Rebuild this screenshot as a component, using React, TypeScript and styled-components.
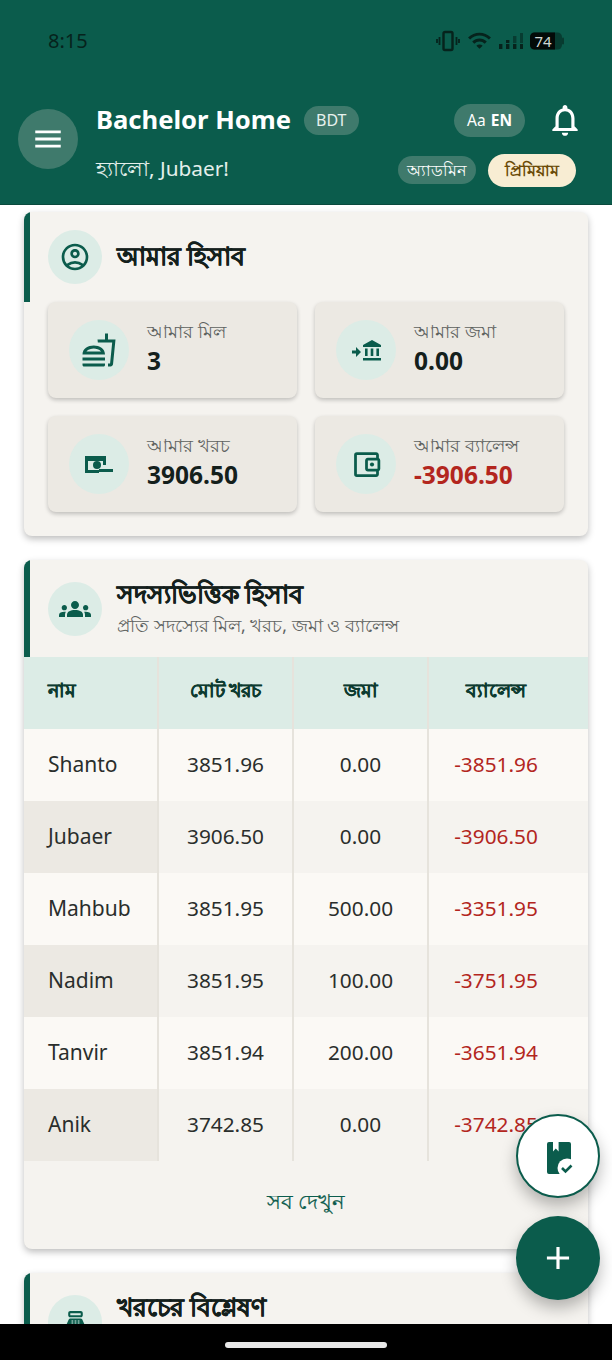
import React from 'react'
import styled, { createGlobalStyle } from 'styled-components'
import {
  MdAdd,
  MdGroups,
  MdMenu,
  MdOutlineAccountBalanceWallet,
  MdOutlineAccountCircle,
  MdOutlineFastfood,
  MdOutlineNotifications,
  MdPointOfSale,
  MdWifi,
} from 'react-icons/md'

const green = '#0b5c4c'
const mint = '#dcece6'
const font = '"Noto Sans", "Open Sans", sans-serif'

const GlobalStyle = createGlobalStyle`
  html, body { margin: 0; padding: 0; background: #fff; }
  * { box-sizing: border-box; }
  body { font-family: ${font}; }
`

const Screen = styled.div`
  position: relative;
  width: 612px;
  height: 1360px;
  overflow: hidden;
  display: flex;
  flex-direction: column;
  background: #fff;
`
const Header = styled.header`
  flex: none;
  height: 205px;
  background: ${green};
  border-bottom: 1px solid #0a4a3d;
  padding: 0 18px;
`
const StatusBar = styled.div`
  height: 81px;
  display: flex;
  align-items: center;
  justify-content: space-between;
  padding: 0 30px 0 30px;
  color: #06231c;
  font-size: 20px;
`
const StatusIcons = styled.div`
  display: flex;
  align-items: center;
  gap: 7px;
`
const AppBar = styled.div`
  display: flex;
  align-items: flex-start;
  gap: 18px;
  padding-top: 22px;
`
const MenuButton = styled.div`
  flex: none;
  width: 60px;
  height: 60px;
  margin-top: 6px;
  border-radius: 50%;
  background: #3f7a6c;
  color: #fff;
  display: flex;
  align-items: center;
  justify-content: center;
`
const AppBarBody = styled.div`
  flex: 1;
  display: flex;
  flex-direction: column;
  gap: 16px;
`
const BarRow = styled.div`
  height: 34px;
  display: flex;
  align-items: center;
  justify-content: space-between;
`
const TitleGroup = styled.div`
  display: flex;
  align-items: center;
  gap: 13px;
`
const HomeName = styled.div`
  color: #fff;
  font-size: 25.600px;
  font-weight: 700;
  line-height: 34px;
`
const CurrencyPill = styled.div`
  background: #3f7a6c;
  color: #e8f1ee;
  font-size: 16px;
  height: 29px;
  line-height: 29px;
  padding: 0 12px;
  border-radius: 15px;
`
const Actions = styled.div`
  display: flex;
  align-items: center;
  gap: 21px;
  color: #fff;
  padding-right: 10px;
`
const LangPill = styled.div`
  background: #3f7a6c;
  color: #fff;
  height: 33px;
  padding: 0 13px;
  border-radius: 17px;
  display: flex;
  align-items: center;
  gap: 5px;
  font-size: 15.500px;
`
const LangStrong = styled.b`
  font-weight: 700;
`
const Greeting = styled.div`
  color: #e4efeb;
  font-size: 20.800px;
  line-height: 30px;
  padding-bottom: 5px;
`
const Badges = styled.div`
  display: flex;
  align-items: center;
  gap: 12px;
  padding-right: 18px;
`
const RoleBadge = styled.div<{ $premium?: boolean }>`
  height: ${p => (p.$premium ? 33 : 28)}px;
  line-height: ${p => (p.$premium ? 33 : 28)}px;
  padding: 0 ${p => (p.$premium ? 17 : 9)}px;
  border-radius: 17px;
  font-size: 16px;
  font-weight: ${p => (p.$premium ? 700 : 400)};
  background: ${p => (p.$premium ? '#f8edd3' : '#3f7a6c')};
  color: ${p => (p.$premium ? '#6b4a07' : '#fff')};
`
const Main = styled.main`
  flex: 1;
  min-height: 0;
  overflow: hidden;
  padding: 7px 24px 0;
  display: flex;
  flex-direction: column;
  gap: 24px;
`
const Card = styled.section`
  flex: none;
  background: #f5f3ef;
  border-radius: 8px;
  box-shadow: 0 3px 7px rgba(0, 0, 0, 0.26);
  overflow: hidden;
`
const SectionHead = styled.div<{ $height: number }>`
  height: ${p => p.$height}px;
  border-left: 6px solid ${green};
  padding: 0 18px;
  display: flex;
  align-items: center;
  gap: 15px;
`
const IconCircle = styled.div<{ $size: number }>`
  flex: none;
  width: ${p => p.$size}px;
  height: ${p => p.$size}px;
  border-radius: 50%;
  background: ${mint};
  color: ${green};
  display: flex;
  align-items: center;
  justify-content: center;
`
const SectionTitle = styled.h2`
  margin: 0;
  padding-bottom: 4px;
  color: #14201c;
  font-size: 24.800px;
  font-weight: 700;
  line-height: 32px;
  -webkit-text-stroke: 0.4px currentColor;
`
const SectionSub = styled.div`
  color: #5e625f;
  font-size: 17.500px;
  line-height: 24px;
  padding-bottom: 3px;
`
const StatGrid = styled.div`
  display: grid;
  grid-template-columns: 1fr 1fr;
  gap: 18px;
  padding: 0 24px 24px;
`
const StatCard = styled.div`
  height: 96px;
  background: #ece9e3;
  border-radius: 8px;
  box-shadow: 0 2px 4px rgba(0, 0, 0, 0.22);
  padding: 0 21px;
  display: flex;
  align-items: center;
  gap: 18px;
`
const StatText = styled.div`
  padding-bottom: 2px;
`
const StatLabel = styled.div`
  color: #5e625f;
  font-size: 18px;
  line-height: 24px;
`
const StatValue = styled.div<{ $negative?: boolean }>`
  color: ${p => (p.$negative ? '#b3261e' : '#14201c')};
  font-size: 24.500px;
  font-weight: 700;
  line-height: 36px;
`
const Table = styled.div`
  display: grid;
  grid-template-columns: 135px 135px 135px 159px;
  grid-auto-rows: 72px;
`
const HeadCell = styled.div<{ $first?: boolean; $last?: boolean }>`
  background: ${mint};
  color: #0d3b30;
  font-size: 18.500px;
  font-weight: 700;
  -webkit-text-stroke: 0.3px currentColor;
  display: flex;
  align-items: center;
  justify-content: ${p => (p.$first ? 'flex-start' : 'center')};
  padding: 0 ${p => (p.$last ? 25 : 0)}px 2px ${p => (p.$first ? 24 : 0)}px;
  border-right: ${p => (p.$last ? 0 : 2)}px solid #e6e3dc;
`
const NameCell = styled.div<{ $even: boolean }>`
  background: ${p => (p.$even ? '#ece9e3' : '#fbf9f5')};
  color: #2a2e2c;
  font-size: 21px;
  display: flex;
  align-items: center;
  padding: 0 0 2px 24px;
  border-right: 2px solid #e6e3dc;
`
const DataCell = styled.div<{ $even: boolean; $negative?: boolean }>`
  background: ${p => (p.$even ? '#f5f3ef' : '#fbf9f5')};
  color: ${p => (p.$negative ? '#b3261e' : '#2a2e2c')};
  font-size: 20.800px;
  display: flex;
  align-items: center;
  justify-content: center;
  padding: 0 ${p => (p.$negative ? 25 : 0)}px 2px 0;
  border-right: ${p => (p.$negative ? 0 : 2)}px solid #e6e3dc;
`
const SeeAll = styled.div`
  height: 88px;
  padding-bottom: 4px;
  display: flex;
  align-items: center;
  justify-content: center;
  color: ${green};
  font-size: 21px;
  font-weight: 500;
  -webkit-text-stroke: 0.2px currentColor;
`
const NavBar = styled.div`
  flex: none;
  height: 36px;
  background: #000;
  display: flex;
  align-items: center;
  justify-content: center;
  padding-top: 6px;
  position: relative;
  z-index: 2;
`
const HomeIndicator = styled.div`
  width: 162px;
  height: 6px;
  border-radius: 3px;
  background: #e8e8e8;
`
const Fab = styled.div<{ $primary?: boolean; $top: number }>`
  position: absolute;
  left: 516px;
  top: ${p => p.$top}px;
  width: 84px;
  height: 84px;
  border-radius: 50%;
  display: flex;
  align-items: center;
  justify-content: center;
  background: ${p => (p.$primary ? green : '#fff')};
  color: ${p => (p.$primary ? '#fff' : green)};
  border: ${p => (p.$primary ? 'none' : `2px solid ${green}`)};
  box-shadow: 0 8px 16px rgba(0, 0, 0, 0.28);
`

const VibrateIcon = () => (
  <svg width="24" height="22" viewBox="0 0 24 22" fill="none" stroke="#06231c">
    <rect x="7.500" y="2" width="9" height="18" rx="1.500" strokeWidth="2.400" />
    <path d="M3.500 7v8M1 9v4M20.500 7v8M23 9v4" strokeWidth="1.800" />
  </svg>
)
const SignalIcon = () => (
  <svg width="24" height="20" viewBox="0 0 24 20" fill="#06231c">
    <rect x="0" y="13" width="3.400" height="5" />
    <rect x="7" y="13" width="3.400" height="5" />
    <rect x="7" y="9" width="3.400" height="3" />
    <rect x="14" y="13" width="3.400" height="5" />
    <rect x="14" y="5" width="3.400" height="7" opacity="0.55" />
    <rect x="21" y="13" width="3" height="5" />
    <rect x="21" y="2" width="3" height="10" opacity="0.55" />
  </svg>
)
const BatteryIcon = () => (
  <svg width="34" height="20" viewBox="0 0 34 20">
    <rect x="0" y="1.500" width="32" height="17" rx="4.500" fill="#06231c" opacity="0.55" />
    <path d="M4.500 1.500H25v17H4.500A4.500 4.500 0 0 1 0 14V6a4.500 4.500 0 0 1 4.500-4.500z" fill="#030a08" />
    <rect x="32" y="6.500" width="2" height="7" rx="1" fill="#06231c" opacity="0.6" />
    <text x="13" y="15.500" textAnchor="middle" fontSize="15" fill="#cfd8d4" fontFamily={font}>
      74
    </text>
  </svg>
)
const DepositIcon = () => (
  <svg width="30" height="24" viewBox="0 0 30 24" fill={green}>
    <path d="M21 2l9 5v2H12V7zM12 20h18v2.500H12zM14 10.500h2.600V18H14zM19.700 10.500h2.600V18h-2.600zM25.400 10.500h2.600V18h-2.600z" />
    <path d="M1 12.500h4V9l5 5-5 5v-3.500H1z" />
  </svg>
)
const CashIcon = () => (
  <svg width="28" height="17" viewBox="0 0 28 17" fill={green}>
    <path d="M0 0h21v9h-3V5H3v9h11v3H0z" />
    <circle cx="12" cy="9" r="4" />
    <rect x="14" y="13" width="14" height="3" />
  </svg>
)
const BookCheckIcon = () => (
  <svg width="30" height="36" viewBox="0 0 30 36">
    <path
      fill={green}
      d="M6 4h4v9.500l2.800-3 2.800 3V4H26a2 2 0 0 1 2 2v28a2 2 0 0 1-2 2H6a2 2 0 0 1-2-2V6a2 2 0 0 1 2-2z"
    />
    <circle cx="24" cy="30" r="9.500" fill="#fff" />
    <path d="M19 30l3.500 3.500 6-6" fill="none" stroke={green} strokeWidth="2.600" />
  </svg>
)

const stats = [
  { label: 'আমার মিল', value: '3', icon: <MdOutlineFastfood size={36} /> },
  { label: 'আমার জমা', value: '0.00', icon: <DepositIcon /> },
  { label: 'আমার খরচ', value: '3906.50', icon: <CashIcon /> },
  {
    label: 'আমার ব্যালেন্স',
    value: '-3906.50',
    negative: true,
    icon: <MdOutlineAccountBalanceWallet size={33} />,
  },
]

const members = [
  ['Shanto', '3851.96', '0.00', '-3851.96'],
  ['Jubaer', '3906.50', '0.00', '-3906.50'],
  ['Mahbub', '3851.95', '500.00', '-3351.95'],
  ['Nadim', '3851.95', '100.00', '-3751.95'],
  ['Tanvir', '3851.94', '200.00', '-3651.94'],
  ['Anik', '3742.85', '0.00', '-3742.85'],
]

export default function App() {
  return (
    <Screen>
      <GlobalStyle />
      <Header>
        <StatusBar>
          <span>8:15</span>
          <StatusIcons>
            <VibrateIcon />
            <MdWifi size={25} color="#06231c" />
            <SignalIcon />
            <BatteryIcon />
          </StatusIcons>
        </StatusBar>
        <AppBar>
          <MenuButton>
            <MdMenu size={34} />
          </MenuButton>
          <AppBarBody>
            <BarRow>
              <TitleGroup>
                <HomeName>Bachelor Home</HomeName>
                <CurrencyPill>BDT</CurrencyPill>
              </TitleGroup>
              <Actions>
                <LangPill>
                  <span>Aa</span>
                  <LangStrong>EN</LangStrong>
                </LangPill>
                <MdOutlineNotifications size={38} />
              </Actions>
            </BarRow>
            <BarRow>
              <Greeting>হ্যালো, Jubaer!</Greeting>
              <Badges>
                <RoleBadge>অ্যাডমিন</RoleBadge>
                <RoleBadge $premium>প্রিমিয়াম</RoleBadge>
              </Badges>
            </BarRow>
          </AppBarBody>
        </AppBar>
      </Header>
      <Main>
        <Card>
          <SectionHead $height={90}>
            <IconCircle $size={54}>
              <MdOutlineAccountCircle size={32} />
            </IconCircle>
            <SectionTitle>আমার হিসাব</SectionTitle>
          </SectionHead>
          <StatGrid>
            {stats.map(s => (
              <StatCard key={s.label}>
                <IconCircle $size={60}>{s.icon}</IconCircle>
                <StatText>
                  <StatLabel>{s.label}</StatLabel>
                  <StatValue $negative={s.negative}>{s.value}</StatValue>
                </StatText>
              </StatCard>
            ))}
          </StatGrid>
        </Card>
        <Card>
          <SectionHead $height={97}>
            <IconCircle $size={54}>
              <MdGroups size={32} />
            </IconCircle>
            <div>
              <SectionTitle>সদস্যভিত্তিক হিসাব</SectionTitle>
              <SectionSub>প্রতি সদস্যের মিল, খরচ, জমা ও ব্যালেন্স</SectionSub>
            </div>
          </SectionHead>
          <Table>
            <HeadCell $first>নাম</HeadCell>
            <HeadCell>মোট খরচ</HeadCell>
            <HeadCell>জমা</HeadCell>
            <HeadCell $last>ব্যালেন্স</HeadCell>
            {members.map((m, i) => (
              <React.Fragment key={m[0]}>
                <NameCell $even={i % 2 === 1}>{m[0]}</NameCell>
                <DataCell $even={i % 2 === 1}>{m[1]}</DataCell>
                <DataCell $even={i % 2 === 1}>{m[2]}</DataCell>
                <DataCell $even={i % 2 === 1} $negative>
                  {m[3]}
                </DataCell>
              </React.Fragment>
            ))}
          </Table>
          <SeeAll>সব দেখুন</SeeAll>
        </Card>
        <Card>
          <SectionHead $height={97}>
            <IconCircle $size={54}>
              <MdPointOfSale size={25} />
            </IconCircle>
            <div>
              <SectionTitle>খরচের বিশ্লেষণ</SectionTitle>
              <SectionSub>&nbsp;</SectionSub>
            </div>
          </SectionHead>
        </Card>
      </Main>
      <NavBar>
        <HomeIndicator />
      </NavBar>
      <Fab $top={1114}>
        <BookCheckIcon />
      </Fab>
      <Fab $primary $top={1216}>
        <MdAdd size={38} />
      </Fab>
    </Screen>
  )
}
